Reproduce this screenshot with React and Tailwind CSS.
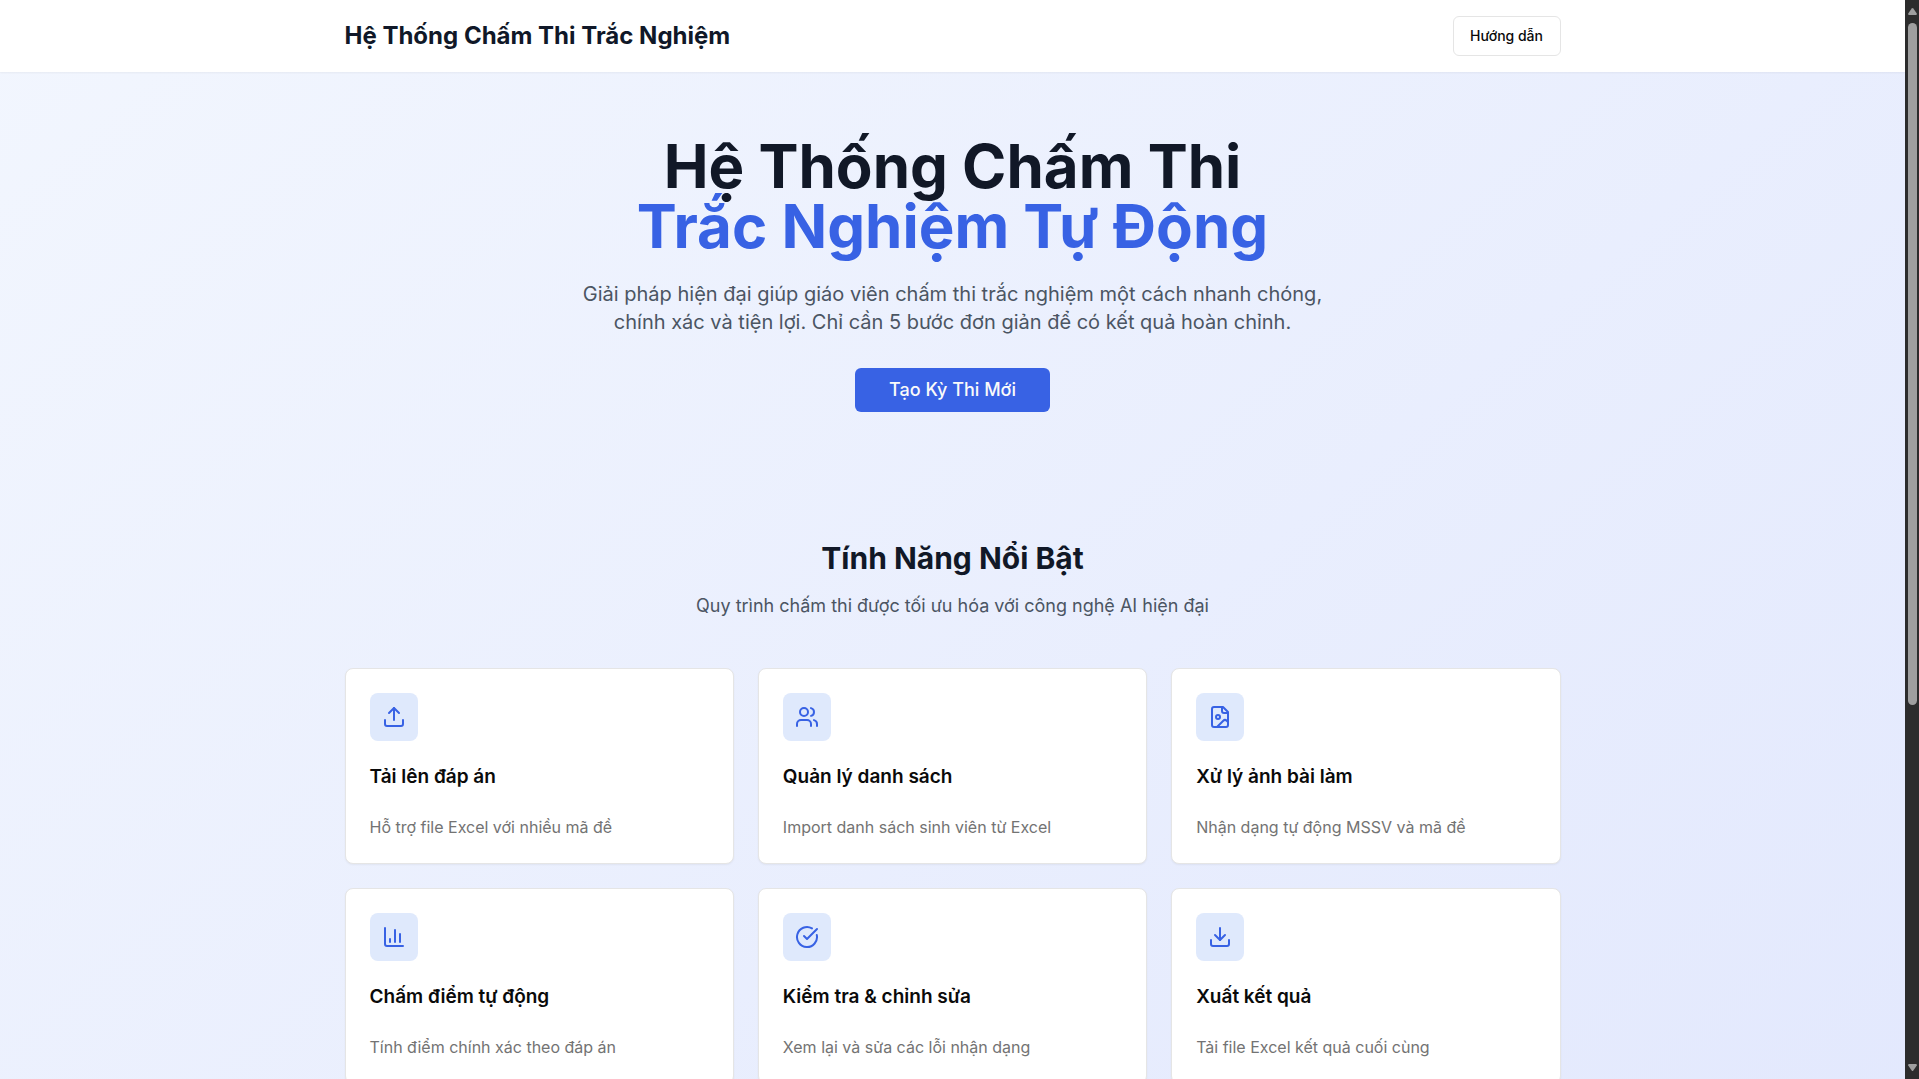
import { ChartColumn, CircleCheckBig, Download, Upload, Users } from "lucide-react";

function FileImage({ className }) {
  return (
    <svg
      className={className}
      viewBox="0 0 24 24"
      fill="none"
      stroke="currentColor"
      strokeWidth="2"
      strokeLinecap="round"
      strokeLinejoin="round"
      aria-hidden="true"
    >
      <path d="M15 2H6a2 2 0 0 0-2 2v16a2 2 0 0 0 2 2h12a2 2 0 0 0 2-2V7Z" />
      <path d="M14 2v4a2 2 0 0 0 2 2h4" />
      <circle cx="10" cy="12" r="2" />
      <path d="m20 17-1.296-1.296a2.41 2.41 0 0 0-3.408 0L9 22" />
    </svg>
  );
}

const features = [
  { icon: Upload, title: "Tải lên đáp án", text: "Hỗ trợ file Excel với nhiều mã đề" },
  { icon: Users, title: "Quản lý danh sách", text: "Import danh sách sinh viên từ Excel" },
  { icon: FileImage, title: "Xử lý ảnh bài làm", text: "Nhận dạng tự động MSSV và mã đề" },
  { icon: ChartColumn, title: "Chấm điểm tự động", text: "Tính điểm chính xác theo đáp án" },
  { icon: CircleCheckBig, title: "Kiểm tra & chỉnh sửa", text: "Xem lại và sửa các lỗi nhận dạng" },
  { icon: Download, title: "Xuất kết quả", text: "Tải file Excel kết quả cuối cùng" },
];

function Header() {
  return (
    <header className="relative bg-white shadow-xs">
      <div className="mx-auto flex max-w-7xl items-center justify-between px-8 py-4">
        <div className="text-2xl font-bold text-gray-900">Hệ Thống Chấm Thi Trắc Nghiệm</div>
        <button
          type="button"
          className="h-10 min-w-[108px] rounded-md border border-[#e5e5e5] bg-white px-4 text-sm font-medium text-[#0a0a0a]"
        >
          Hướng dẫn
        </button>
      </div>
    </header>
  );
}

function Hero() {
  return (
    <section className="mx-auto max-w-7xl px-8 py-16 text-center">
      <h1 className="text-6xl font-bold text-[#111827]">
        Hệ Thống Chấm Thi
        <span className="block text-[#3862e4]">Trắc Nghiệm Tự Động</span>
      </h1>
      <p className="mx-auto mt-6 max-w-3xl text-xl text-[#4b5563]">
        Giải pháp hiện đại giúp giáo viên chấm thi trắc nghiệm một cách nhanh chóng, chính xác và
        tiện lợi. Chỉ cần 5 bước đơn giản để có kết quả hoàn chỉnh.
      </p>
      <button
        type="button"
        className="mt-8 h-11 min-w-[195px] rounded-md bg-[#3862e4] px-8 text-lg font-medium text-[#fafafa]"
      >
        Tạo Kỳ Thi Mới
      </button>
    </section>
  );
}

function FeatureCard({ icon: Icon, title, text }) {
  return (
    <article className="rounded-lg border border-[#e5e5e5] bg-white p-6 shadow-xs">
      <div className="flex size-12 items-center justify-center rounded-lg bg-[#dfe9fc] text-[#3862e4]">
        <Icon className="size-6" />
      </div>
      <h3 className="mt-[22px] text-[19px] leading-7 font-semibold text-[#0a0a0a]">{title}</h3>
      <p className="mt-6 text-base text-[#737373]">{text}</p>
    </article>
  );
}

function Features() {
  return (
    <section className="mx-auto max-w-7xl px-8 py-16">
      <div className="mb-12 text-center">
        <h2 className="text-3xl font-bold text-[#111827]">Tính Năng Nổi Bật</h2>
        <p className="mt-4 text-lg text-[#4b5563]">
          Quy trình chấm thi được tối ưu hóa với công nghệ AI hiện đại
        </p>
      </div>
      <div className="grid gap-6 md:grid-cols-2 lg:grid-cols-3">
        {features.map((feature) => (
          <FeatureCard key={feature.title} {...feature} />
        ))}
      </div>
    </section>
  );
}

function ScrollTrack() {
  return (
    <div aria-hidden="true" className="flex w-3.5 shrink-0 flex-col items-center bg-[#2c2c2c] py-2">
      <svg className="h-[7px] w-[9px] shrink-0" viewBox="0 0 9 7" fill="#9f9f9f">
        <path d="M3.7.6a1 1 0 0 1 1.6 0L8.8 5.6Q9 7 8 7H1Q0 7 .2 5.6Z" />
      </svg>
      <div className="my-2 flex w-full flex-1 justify-center">
        <div className="h-[66%] w-[9px] rounded-full bg-[#9f9f9f]" />
      </div>
      <svg className="h-[7px] w-[9px] shrink-0" viewBox="0 0 9 7" fill="#9f9f9f">
        <path d="M3.7 6.4a1 1 0 0 0 1.6 0L8.8 1.4Q9 0 8 0H1Q0 0 .2 1.4Z" />
      </svg>
    </div>
  );
}

export default function App() {
  return (
    <div className="flex h-screen overflow-hidden font-['Inter',sans-serif]">
      <div className="min-w-0 flex-1 overflow-hidden">
        <div className="min-h-[150vh] bg-linear-to-br/srgb from-[#f2f6fe] to-[#e0e6fd]">
          <Header />
          <main>
            <Hero />
            <Features />
          </main>
        </div>
      </div>
      <ScrollTrack />
    </div>
  );
}
